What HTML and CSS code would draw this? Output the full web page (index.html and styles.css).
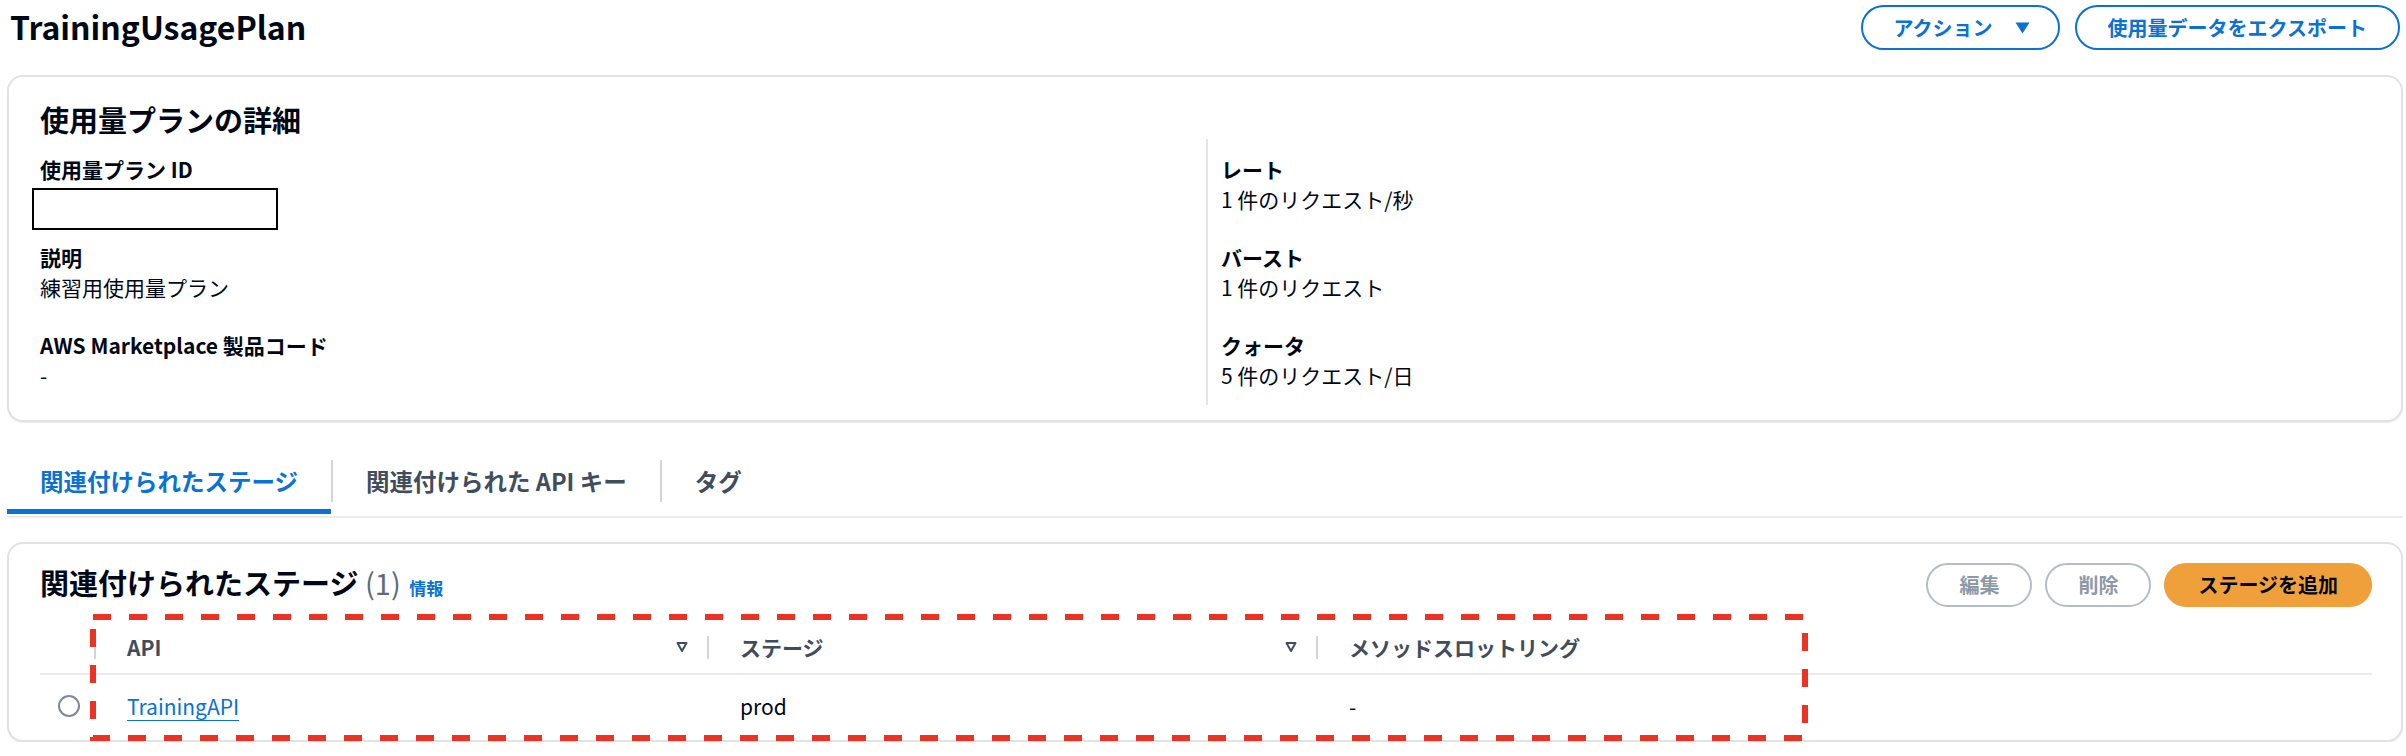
FILE: index.html
```html
<!DOCTYPE html>
<html lang="ja">
<head>
<meta charset="utf-8">
<title>TrainingUsagePlan</title>
<link rel="stylesheet" href="styles.css">
</head>
<body>
<div class="page">
  <header class="page-header">
    <h1 class="page-title">TrainingUsagePlan</h1>
    <div class="header-actions">
      <button class="btn btn-normal">アクション
        <svg class="caret" width="15" height="12" viewBox="0 0 15 12"><path d="M0.5 0.5 H14.5 L7.5 11.5 Z" fill="#0972d3"/></svg>
      </button>
      <button class="btn btn-normal">使用量データをエクスポート</button>
    </div>
  </header>

  <section class="card details-card">
    <h2 class="card-title">使用量プランの詳細</h2>
    <div class="details-grid">
      <div class="details-col">
        <div class="field">
          <div class="field-label">使用量プラン ID</div>
          <div class="id-box"></div>
        </div>
        <div class="field field-after-box">
          <div class="field-label">説明</div>
          <div class="field-value">練習用使用量プラン</div>
        </div>
        <div class="field">
          <div class="field-label">AWS Marketplace 製品コード</div>
          <div class="field-value">-</div>
        </div>
      </div>
      <div class="details-col details-col-right">
        <div class="field">
          <div class="field-label">レート</div>
          <div class="field-value">1 件のリクエスト/秒</div>
        </div>
        <div class="field">
          <div class="field-label">バースト</div>
          <div class="field-value">1 件のリクエスト</div>
        </div>
        <div class="field">
          <div class="field-label">クォータ</div>
          <div class="field-value">5 件のリクエスト/日</div>
        </div>
      </div>
    </div>
  </section>

  <nav class="tabs">
    <div class="tab tab-active">関連付けられたステージ</div>
    <span class="tab-sep"></span>
    <div class="tab">関連付けられた API キー</div>
    <span class="tab-sep"></span>
    <div class="tab">タグ</div>
  </nav>

  <section class="card stages-card">
    <div class="stages-header">
      <h2 class="card-title">関連付けられたステージ <span class="count">(1)</span> <a class="info-link">情報</a></h2>
      <div class="stages-actions">
        <button class="btn btn-disabled">編集</button>
        <button class="btn btn-disabled">削除</button>
        <button class="btn btn-primary">ステージを追加</button>
      </div>
    </div>
    <div class="table">
      <div class="th th-select"><span class="col-sep"></span></div>
      <div class="th"><span class="th-label">API</span>
        <svg class="sort-icon" width="12" height="12" viewBox="0 0 12 12"><path d="M1.5 2 H10.5 L6 10 Z" fill="none" stroke="#414d5c" stroke-width="2" stroke-linejoin="round"/></svg>
        <span class="col-sep"></span></div>
      <div class="th"><span class="th-label">ステージ</span>
        <svg class="sort-icon" width="12" height="12" viewBox="0 0 12 12"><path d="M1.5 2 H10.5 L6 10 Z" fill="none" stroke="#414d5c" stroke-width="2" stroke-linejoin="round"/></svg>
        <span class="col-sep"></span></div>
      <div class="th"><span class="th-label">メソッドスロットリング</span></div>

      <div class="td td-select"><span class="radio"></span></div>
      <div class="td"><a class="link">TrainingAPI</a></div>
      <div class="td">prod</div>
      <div class="td">-</div>
    </div>
    <div class="annotation">
      <svg width="1718" height="127" viewBox="0 0 1718 127"><rect x="3" y="3" width="1712" height="121" fill="none" stroke="#ea3323" stroke-width="6" stroke-dasharray="18 18"/></svg>
    </div>
  </section>
</div>
</body>
</html>
```

FILE: styles.css
```css
* { box-sizing: border-box; }

html, body {
  margin: 0;
  padding: 0;
  background: #ffffff;
}

body {
  font-family: "Noto Sans CJK JP", "Noto Sans", sans-serif;
  color: #000716;
}

.page {
  padding: 0 3px 0 7px;
}

/* Header */
.page-header {
  display: flex;
  justify-content: space-between;
  align-items: flex-start;
  height: 50px;
  padding-left: 3px;
}

.page-title {
  margin: 4px 0 0;
  font-size: 32px;
  line-height: 44px;
  font-weight: 700;
  color: #000716;
}

.header-actions {
  display: flex;
  gap: 15px;
  margin-top: 5px;
  margin-right: 3px;
}

.btn {
  font-family: inherit;
  height: 45px;
  border-radius: 24px;
  padding: 0 31px;
  font-size: 20px;
  font-weight: 700;
  line-height: 1;
  display: inline-flex;
  align-items: center;
  justify-content: center;
  background: #ffffff;
  cursor: pointer;
}

.btn-normal {
  border: 2px solid #0972d3;
  color: #0972d3;
}

.caret {
  margin-left: 22px;
  margin-right: -3px;
}

.btn-disabled {
  height: 44px;
  border: 2px solid #b4bcc6;
  color: #8d99a8;
}

.btn-primary {
  height: 44px;
  border: 2px solid #f0a03a;
  background: #f0a03a;
  color: #000716;
  padding: 0 32px;
}

/* Cards */
.card {
  position: relative;
  border: 2px solid #e0e2e6;
  border-radius: 16px;
  background: #ffffff;
  box-shadow: 0 1px 1px rgba(0, 7, 22, 0.08);
}

.details-card {
  margin-top: 25px;
  padding: 24px 29px 15px 31px;
}

.card-title {
  margin: 0;
  font-size: 29px;
  line-height: 36px;
  font-weight: 700;
  color: #000716;
}

.details-grid {
  display: grid;
  grid-template-columns: 1fr 1fr;
  margin-top: 2px;
}

.details-col {
  padding: 16px 0 16px 0;
}

.details-col-right {
  border-left: 2px solid #e3e5e8;
  padding-left: 13px;
}

.field + .field {
  margin-top: 30px;
}

.field.field-after-box {
  margin-top: 13px;
}

.field-label {
  font-size: 21px;
  line-height: 28px;
  font-weight: 700;
}

.field-value {
  margin-top: 2px;
  font-size: 21px;
  line-height: 28px;
  font-weight: 400;
}

.id-box {
  margin-top: 5px;
  margin-left: -8px;
  width: 246px;
  height: 42px;
  border: 2px solid #000000;
  background: #ffffff;
}

/* Tabs */
.tabs {
  display: flex;
  align-items: flex-start;
  margin-top: 33px;
  padding-bottom: 2px;
  border-bottom: 2px solid #e9ebed;
}

.tab {
  padding: 10px 33px 12px;
  font-size: 23.5px;
  line-height: 32px;
  font-weight: 700;
  color: #414d5c;
  border-bottom: 5px solid transparent;
  white-space: nowrap;
}

.tab-active {
  color: #0972d3;
  border-bottom-color: #0972d3;
}

.tab-sep {
  width: 2px;
  height: 42px;
  margin-top: 5px;
  background: #d1d5db;
}

/* Stages card */
.stages-card {
  margin-top: 24px;
  padding: 19px 29px 3px 31px;
}

.stages-header {
  display: flex;
  justify-content: space-between;
  align-items: center;
  height: 44px;
}

.count {
  font-weight: 400;
  color: #5f6b7a;
}

.info-link {
  font-size: 17px;
  font-weight: 700;
  color: #0972d3;
  margin-left: 2px;
}

.stages-actions {
  display: flex;
  gap: 13px;
}

.table {
  margin-top: 14px;
  display: grid;
  grid-template-columns: 56px 613px 609px 1fr;
}

.th {
  height: 54px;
  display: flex;
  align-items: center;
  padding-left: 31px;
  border-bottom: 2px solid #e9ebed;
  font-size: 21px;
  font-weight: 700;
  color: #414d5c;
}

.th-select {
  padding-left: 0;
  justify-content: flex-end;
}

.th-label {
  flex: 1;
}

.sort-icon {
  margin-right: 19px;
}

.col-sep {
  width: 2px;
  height: 23px;
  background: #d1d5db;
}

.td {
  height: 62px;
  display: flex;
  align-items: center;
  padding-left: 31px;
  font-size: 21px;
  color: #000716;
}

.td-select {
  padding-left: 0;
  justify-content: center;
}

.radio {
  width: 22px;
  height: 22px;
  border-radius: 50%;
  border: 2px solid #7d8998;
  background: #ffffff;
  margin-left: 1px;
}

.link {
  color: #0972d3;
  text-decoration: underline;
  text-decoration-thickness: 1px;
  text-underline-offset: 5px;
}

.annotation {
  position: absolute;
  left: 81px;
  top: 70px;
  width: 1718px;
  height: 127px;
  pointer-events: none;
}

.annotation svg {
  display: block;
}
```
